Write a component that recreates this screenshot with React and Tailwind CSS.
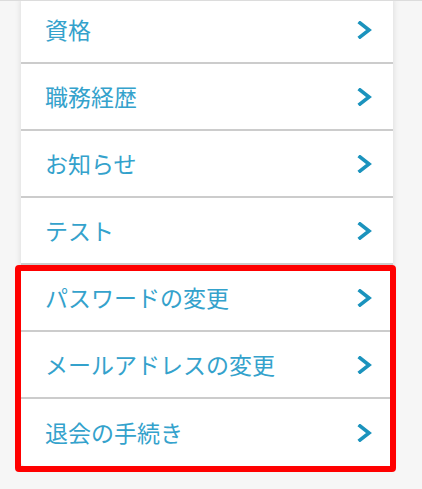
import React from "react";

const items = ["資格", "職務経歴", "お知らせ", "テスト", "パスワードの変更", "メールアドレスの変更", "退会の手続き"];

function Chevron() {
  return (
    <svg width="16" height="18" viewBox="0 0 16 18" className="shrink-0">
      <path d="M3 2 L12 9 L3 16" fill="none" stroke="#1b93bd" strokeWidth="3.6" strokeLinecap="square" strokeLinejoin="miter" />
    </svg>
  );
}

export default function App() {
  return (
    <div className="relative w-[422px] h-[489px] overflow-hidden bg-[#f6f6f6] border-t border-[#dcdcdc]" style={{ fontFamily: '"Noto Sans CJK JP", "Noto Sans", sans-serif' }}>
      <div className="ml-[21px] mt-[-4px] w-[372px] bg-white rounded-b-[4px] shadow-[0_1px_6px_rgba(0,0,0,0.12)]">
        {items.map((t, i) => (
          <div key={t} className={`flex items-center justify-between h-[67px] pl-[24px] pr-[20px] ${i < items.length - 1 ? "border-b-2 border-[#cccccc]" : ""}`}>
            <span className="text-[23px] text-[#34a2cc] leading-none">{t}</span>
            <Chevron />
          </div>
        ))}
      </div>
      <div className="absolute left-[15px] top-[264px] w-[381px] h-[207px] border-[6px] border-[#ff0000] rounded-[4px]" />
    </div>
  );
}
